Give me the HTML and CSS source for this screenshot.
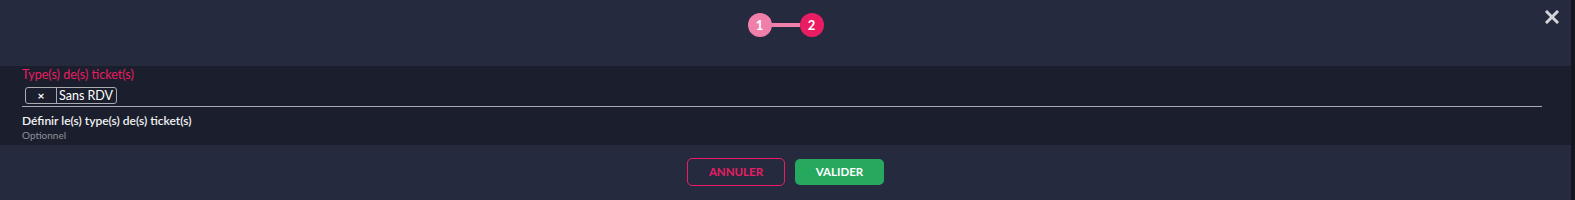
FILE: index.html
```html
<!DOCTYPE html>
<html lang="fr">
<head>
<meta charset="utf-8">
<link rel="stylesheet" href="styles.css">
</head>
<body>
<div class="modal">
  <div class="header">
    <div class="steps">
      <span class="step done">1</span>
      <span class="bar"></span>
      <span class="step active">2</span>
    </div>
    <button class="close" aria-label="Fermer">
      <svg width="14" height="14" viewBox="0 0 14 14"><path d="M2 2 L12 12 M12 2 L2 12" stroke="#d4d5d9" stroke-width="3" stroke-linecap="square"/></svg>
    </button>
  </div>
  <div class="content">
    <div class="label">Type(s) de(s) ticket(s)</div>
    <div class="field">
      <span class="chip"><span class="chip-x">×</span><span class="chip-text">Sans RDV</span></span>
    </div>
    <div class="hint">Définir le(s) type(s) de(s) ticket(s)</div>
    <div class="sub">Optionnel</div>
  </div>
  <div class="footer">
    <button class="btn cancel">ANNULER</button>
    <button class="btn ok">VALIDER</button>
  </div>
</div>
</body>
</html>
```
FILE: styles.css
```css
* { box-sizing: border-box; }
html, body { margin: 0; padding: 0; }
body {
  background: #14161e;
  font-family: "Lato", "Open Sans", sans-serif;
  width: 1575px;
  height: 200px;
  overflow: hidden;
}
.modal {
  width: 1571px;
  height: 200px;
  background: #252a3f;
  display: flex;
  flex-direction: column;
}
.header {
  height: 66px;
  position: relative;
  display: flex;
  justify-content: center;
  padding-top: 13px;
}
.steps {
  display: flex;
  align-items: center;
  height: 24px;
}
.step {
  width: 24px;
  height: 24px;
  border-radius: 50%;
  display: flex;
  align-items: center;
  justify-content: center;
  color: #fff;
  font-weight: 700;
  font-size: 13px;
}
.step.done { background: #f07fab; }
.step.active { background: #ea1d63; }
.bar {
  width: 28px;
  height: 4px;
  background: #f07fab;
}
.close {
  position: absolute;
  top: 10px;
  left: 1545px;
  width: 14px;
  height: 14px;
  padding: 0;
  border: 0;
  background: none;
  display: block;
}
.close svg { display: block; }
.content {
  height: 79px;
  background: #1b1f2d;
  padding: 0 29px 0 22px;
}
.label {
  color: #ea1d63;
  font-size: 12.5px;
  line-height: 16px;
  padding-top: 1px;
}
.field {
  border-bottom: 1px solid #a9abb0;
  padding: 4px 0 2px 3px;
  height: 24px;
  display: flex;
  align-items: flex-start;
}
.chip {
  display: flex;
  height: 17px;
  border: 1px solid #a9abb0;
  border-radius: 3px;
  color: #fff;
  font-size: 12.5px;
  line-height: 15px;
}
.chip-x {
  width: 31px;
  text-align: center;
  border-right: 1px solid #a9abb0;
  font-size: 12px;
  font-weight: 700;
}
.chip-text {
  padding: 0 3px 0 2px;
}
.hint {
  color: #f2f2f4;
  font-size: 12px;
  font-weight: 600;
  line-height: 15px;
  margin-top: 6px;
}
.sub {
  color: #8d909a;
  font-size: 10px;
  line-height: 12px;
  margin-top: 1px;
}
.footer {
  flex: 1;
  display: flex;
  justify-content: center;
  align-items: center;
  gap: 10px;
  padding-bottom: 2px;
}
.btn {
  font-family: "Lato", "Open Sans", sans-serif;
  font-weight: 700;
  font-size: 11.5px;
  border-radius: 5px;
  padding: 0;
  display: flex;
  align-items: center;
  justify-content: center;
}
.cancel {
  width: 98px;
  height: 28px;
  background: transparent;
  color: #ea1d63;
  border: 1px solid #ea1d63;
}
.ok {
  width: 89px;
  height: 26px;
  background: #27a85f;
  color: #fff;
  border: 0;
}
```
